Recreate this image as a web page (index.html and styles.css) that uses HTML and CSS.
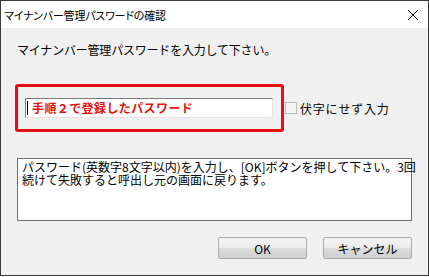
FILE: index.html
```html
<!DOCTYPE html>
<html lang="ja">
<head>
    <meta charset="UTF-8">
    <title>マイナンバー管理パスワードの確認</title>
    <link rel="stylesheet" href="styles.css">
</head>
<body>
    <div class="window">
        <div class="titlebar">
            <span class="title">マイナンバー管理パスワードの確認</span>
            <svg class="close" width="12" height="12" viewBox="0 0 12 12">
                <path d="M1 1 L11 11 M11 1 L1 11" stroke="#000" stroke-width="1" fill="none"/>
            </svg>
        </div>
        <div class="main">
            <div class="prompt">マイナンバー管理パスワードを入力して下さい。</div>
            <div class="row">
                <div class="highlight">
                    <div class="field"><span class="caret"></span>手順２で登録したパスワード</div>
                </div>
                <span class="checkbox"></span>
                <span class="check-label">伏字にせず入力</span>
            </div>
            <div class="message">パスワード(英数字8文字以内)を入力し、[OK]ボタンを押して下さい。3回<br>続けて失敗すると呼出し元の画面に戻ります。</div>
            <div class="buttons">
                <button class="button">OK</button>
                <button class="button">キャンセル</button>
            </div>
        </div>
    </div>
</body>
</html>
```

FILE: styles.css
```css
body {
    margin: 0;
    background: #fff;
    font-family: "Noto Sans CJK JP", sans-serif;
    font-size: 12px;
    color: #000;
}

.window {
    width: 429px;
    height: 276px;
    box-sizing: border-box;
    border: 1px solid #3a3a3a;
    display: flex;
    flex-direction: column;
}

.titlebar {
    height: 27px;
    background: #fff;
    display: flex;
    align-items: center;
    justify-content: space-between;
    padding: 0 9px 0 3px;
}

.title {
    font-size: 11px;
    font-feature-settings: "palt";
    letter-spacing: -0.2px;
}

.main {
    flex: 1;
    background: #f0f0f0;
    padding: 15px 16px 0 14px;
}

.prompt {
    line-height: 14px;
    margin-left: 2px;
    letter-spacing: -0.2px;
}

.row {
    display: flex;
    align-items: center;
    margin-top: 27px;
}

.highlight {
    width: 269px;
    height: 48px;
    box-sizing: border-box;
    border: 3px solid #e8100f;
    border-radius: 3px;
    padding: 11px 0 0 7px;
}

.field {
    width: 248px;
    height: 20px;
    box-sizing: border-box;
    background: #fff;
    border-top: 1px solid #7a7a7a;
    border-left: 1px solid #7a7a7a;
    border-right: 1px solid #e3e3e3;
    border-bottom: 1px solid #e3e3e3;
    color: #e8100f;
    font-weight: bold;
    font-size: 12px;
    line-height: 18px;
    letter-spacing: 0.4px;
    display: flex;
    align-items: center;
}

.caret {
    width: 1px;
    height: 14px;
    background: #000;
    margin: 0 4px 0 1px;
}

.checkbox {
    width: 12px;
    height: 12px;
    box-sizing: border-box;
    border: 1px solid #bdbdbd;
    background: #f4f4f4;
    margin-left: 1px;
}

.check-label {
    margin-left: 3px;
    font-size: 12px;
    letter-spacing: 0.8px;
}

.message {
    margin: 26px 0 0 2px;
    height: 63px;
    box-sizing: border-box;
    background: #fff;
    border: 1px solid #707070;
    padding: 1px 0 0 4px;
    line-height: 13px;
    white-space: nowrap;
}

.buttons {
    display: flex;
    justify-content: flex-end;
    gap: 16px;
    margin-top: 16px;
}

.button {
    width: 89px;
    height: 22px;
    border: 1px solid #acacac;
    border-radius: 2px;
    background: linear-gradient(#f3f3f3, #ebebeb 50%, #dddddd 50%, #cfcfcf);
    font-family: "Noto Sans CJK JP", sans-serif;
    font-size: 12px;
    color: #000;
    padding: 0;
}
```
